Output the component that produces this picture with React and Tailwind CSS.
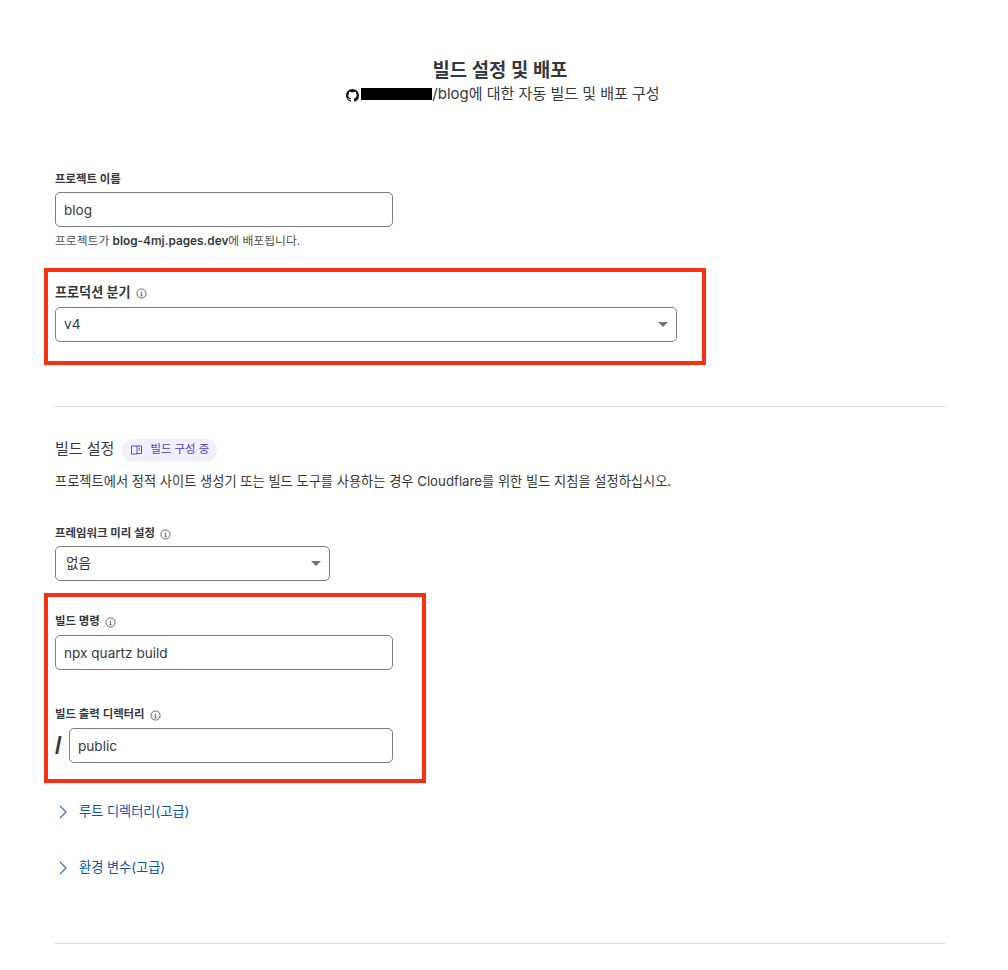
const FONT = { fontFamily: '"Inter", "Noto Sans CJK KR", sans-serif' };

function Info() {
  return (
    <svg width="11" height="11" viewBox="0 0 12 12" fill="none" stroke="#4a4a4a" strokeWidth="0.9" className="shrink-0">
      <circle cx="6" cy="6" r="5" />
      <path d="M5 5.2h1.1v3.2M4.8 8.5h2.5" />
      <circle cx="5.9" cy="3.5" r="0.5" fill="#4a4a4a" stroke="none" />
    </svg>
  );
}

function Label({ children, info, className = "" }) {
  return (
    <div className={`flex items-center gap-[5px] h-[16px] font-semibold text-[#36393a] ${className}`}>
      <span>{children}</span>
      {info && <Info />}
    </div>
  );
}

function Field({ value, className = "" }) {
  return (
    <div className={`flex items-center h-[35px] px-[8px] pt-[1px] rounded-[5px] border border-[#797c80] bg-white text-[13.6px] text-[#36393a] ${className}`}>
      {value}
    </div>
  );
}

function Select({ value, className = "" }) {
  return (
    <div className={`flex items-center justify-between h-[35px] pr-[8px] rounded-[5px] border border-[#797c80] bg-white text-[13.6px] text-[#36393a] ${className}`}>
      <span>{value}</span>
      <svg width="10" height="5" viewBox="0 0 10 5"><path d="M0 0h10L5 5z" fill="#6f7276" /></svg>
    </div>
  );
}

function Expander({ children, className = "" }) {
  return (
    <div className={`flex items-center h-[20px] text-[13.2px] text-[#0a55b0] ${className}`}>
      <svg width="8" height="14" viewBox="0 0 8 14" fill="none" stroke="#2f6cb5" strokeWidth="1.2" className="ml-[4px] mr-[12px]">
        <path d="M1 1l6 6-6 6" />
      </svg>
      <span>{children}</span>
    </div>
  );
}

export default function App() {
  return (
    <div className="relative w-[1008px] h-[970px] overflow-hidden bg-white px-[55px] pr-[63px]" style={FONT}>
      <header className="pt-[59px] flex flex-col items-center ml-[-2px] mr-[-2px]">
        <h1 className="h-[24px] leading-[24px] text-[18.8px] font-semibold text-[#36393a]">빌드 설정 및 배포</h1>
        <div className="flex items-center h-[24px] pb-[2px] pl-[6px] text-[15px] text-[#36393a]">
          <svg width="13" height="13" viewBox="0 0 16 16" fill="#111" className="mr-[2px] mt-[2px]">
            <path d="M8 0C3.58 0 0 3.58 0 8c0 3.54 2.29 6.53 5.47 7.59.4.07.55-.17.55-.38 0-.19-.01-.82-.01-1.49-2.01.37-2.53-.49-2.69-.94-.09-.23-.48-.94-.82-1.13-.28-.15-.68-.52-.01-.53.63-.01 1.08.58 1.23.82.72 1.21 1.87.87 2.33.66.07-.52.28-.87.51-1.07-1.78-.2-3.64-.89-3.64-3.95 0-.87.31-1.59.82-2.15-.08-.2-.36-1.02.08-2.12 0 0 .67-.21 2.2.82.64-.18 1.32-.27 2-.27s1.36.09 2 .27c1.53-1.04 2.2-.82 2.2-.82.44 1.1.16 1.92.08 2.12.51.56.82 1.27.82 2.15 0 3.07-1.87 3.75-3.65 3.95.29.25.54.73.54 1.48 0 1.07-.01 1.93-.01 2.2 0 .21.15.46.55.38A8.01 8.01 0 0 0 16 8c0-4.42-3.58-8-8-8z" />
          </svg>
          <span className="w-[71px] h-[12px] bg-black" />
          <span>/blog에 대한 자동 빌드 및 배포 구성</span>
        </div>
      </header>

      <Label className="mt-[65px] text-[11.4px]">프로젝트 이름</Label>
      <Field value="blog" className="w-[338px] mt-[4px]" />
      <p className="mt-[6px] h-[16px] leading-[16px] text-[11.8px] text-[#4f5357]">
        프로젝트가 <b className="font-semibold text-[#36393a]">blog-4mj.pages.dev</b>에 배포됩니다.
      </p>

      <Label info className="mt-[36px] text-[13.1px]">프로덕션 분기</Label>
      <Select value="v4" className="w-[622px] mt-[6px] pl-[8px]" />

      <hr className="mt-[64px] border-0 h-px bg-[#d9d9d9]" />

      <div className="flex items-center mt-[30px] h-[24px]">
        <h2 className="text-[15px] text-[#36393a]">빌드 설정</h2>
        <span className="ml-[8px] mt-[2px] inline-flex items-center h-[23px] w-[95px] pl-[9px] rounded-full bg-[#f0effb] text-[11.4px] text-[#4b3fc0]">
          <svg width="11" height="10" viewBox="0 0 11 10" fill="none" stroke="#4b3fc0" strokeWidth="0.9" className="mr-[8px]">
            <path d="M.5 1h5.5v8H.5zM6 1h4.5v7.5H6M7.5 3.2h1.6M7.5 5h1.6" />
          </svg>
          빌드 구성 중
        </span>
      </div>
      <p className="mt-[10px] h-[20px] leading-[20px] text-[13.24px] text-[#36393a]">
        프로젝트에서 정적 사이트 생성기 또는 빌드 도구를 사용하는 경우 Cloudflare를 위한 빌드 지침을 설정하십시오.
      </p>

      <Label info className="mt-[35px] text-[11.4px]">프레임워크 미리 설정</Label>
      <Select value="없음" className="w-[275px] mt-[4px] pl-[10px]" />

      <Label info className="mt-[33px] text-[11.4px]">빌드 명령</Label>
      <Field value="npx quartz build" className="w-[338px] mt-[5px]" />

      <Label info className="mt-[37px] text-[11.4px]">빌드 출력 디렉터리</Label>
      <div className="flex items-center w-[338px] mt-[5px]">
        <span className="w-[14px] font-['Liberation_Sans'] text-[24px] font-bold leading-[35px] text-[#36393a]">/</span>
        <Field value="public" className="flex-1" />
      </div>

      <Expander className="mt-[39px]">루트 디렉터리(고급)</Expander>
      <Expander className="mt-[36px]">환경 변수(고급)</Expander>

      <hr className="mt-[65px] border-0 h-px bg-[#d9d9d9]" />

      <div className="absolute left-[44px] top-[268px] w-[662px] h-[97px] border-[4px] border-[#fa2f10]" />
      <div className="absolute left-[44px] top-[593px] w-[382px] h-[190px] border-[4px] border-[#fa2f10]" />
    </div>
  );
}
